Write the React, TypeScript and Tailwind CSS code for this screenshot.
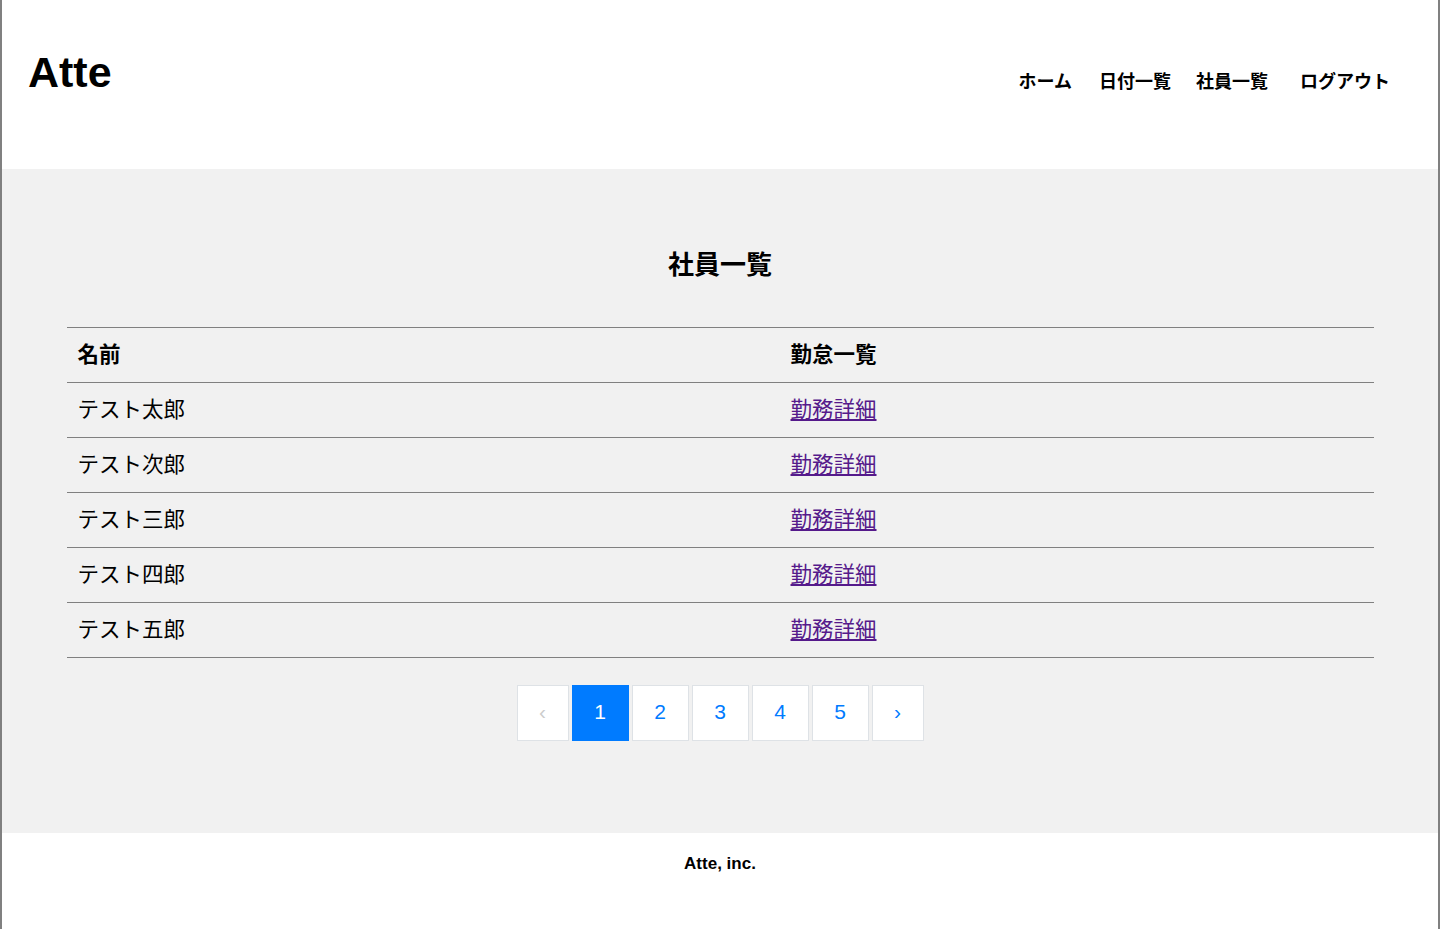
const employees = ["テスト太郎", "テスト次郎", "テスト三郎", "テスト四郎", "テスト五郎"];

const jp = "font-['Noto_Sans_CJK_JP',sans-serif]";

function Header() {
  return (
    <header className="flex h-[169px] items-start justify-between bg-white">
      <h1 className="pl-[26px] pt-[51px] font-['Liberation_Sans',Arial,sans-serif] text-[43px] font-bold leading-none text-black">
        Atte
      </h1>
      <nav className={`flex pr-[48px] pt-[71px] text-[18px] font-bold leading-none text-black ${jp}`}>
        <a href="#">ホーム</a>
        <a href="#" className="ml-[27px]">日付一覧</a>
        <a href="#" className="ml-[25px]">社員一覧</a>
        <a href="#" className="ml-[32px]">ログアウト</a>
      </nav>
    </header>
  );
}

function Pagination() {
  const pages = [1, 2, 3, 4, 5];
  return (
    <div className="flex justify-center gap-[3px] font-['Liberation_Sans',Arial,sans-serif] text-[21px]">
      <span className="flex h-[56px] w-[52px] items-center justify-center border border-[#dee2e6] bg-white pb-[2px] text-[#cccccc]">
        ‹
      </span>
      {pages.map((p) => (
        <a
          key={p}
          href="#"
          className={
            p === 1
              ? "flex h-[56px] w-[57px] items-center justify-center border border-[#007bff] bg-[#007bff] pb-[2px] text-white"
              : "flex h-[56px] w-[57px] items-center justify-center border border-[#dee2e6] bg-white pb-[2px] text-[#007bff]"
          }
        >
          {p}
        </a>
      ))}
      <a href="#" className="flex h-[56px] w-[52px] items-center justify-center border border-[#dee2e6] bg-white pb-[2px] text-[#007bff]">
        ›
      </a>
    </div>
  );
}

export default function App() {
  return (
    <div className="min-h-[929px] border-x-2 border-[#808080] bg-white">
      <Header />

      <main className="bg-[#f1f1f1] pb-[92px] pt-[81px]">
        <h2 className={`text-center text-[26px] font-bold leading-none text-black ${jp}`}>社員一覧</h2>

        <div className={`mx-auto mt-[51px] w-[1307px] border-t border-[#808080] text-[21.5px] text-black ${jp}`}>
          <div className="grid h-[55px] grid-cols-[713px_1fr] items-center border-b border-[#808080] pb-[4px] font-bold">
            <div className="pl-[11px]">名前</div>
            <div className="pl-[11px]">勤怠一覧</div>
          </div>
          {employees.map((name) => (
            <div key={name} className="grid h-[55px] grid-cols-[713px_1fr] items-center border-b border-[#808080] pb-[4px]">
              <div className="pl-[11px]">{name}</div>
              <div className="pl-[11px]">
                <a href="#" className="text-[#551a8b] underline">
                  勤務詳細
                </a>
              </div>
            </div>
          ))}
        </div>

        <div className="mt-[27px]">
          <Pagination />
        </div>
      </main>

      <footer className="h-[96px] bg-white pt-[22px] text-center font-['Liberation_Sans',Arial,sans-serif] text-[17px] font-bold leading-none text-black">
        Atte, inc.
      </footer>
    </div>
  );
}
